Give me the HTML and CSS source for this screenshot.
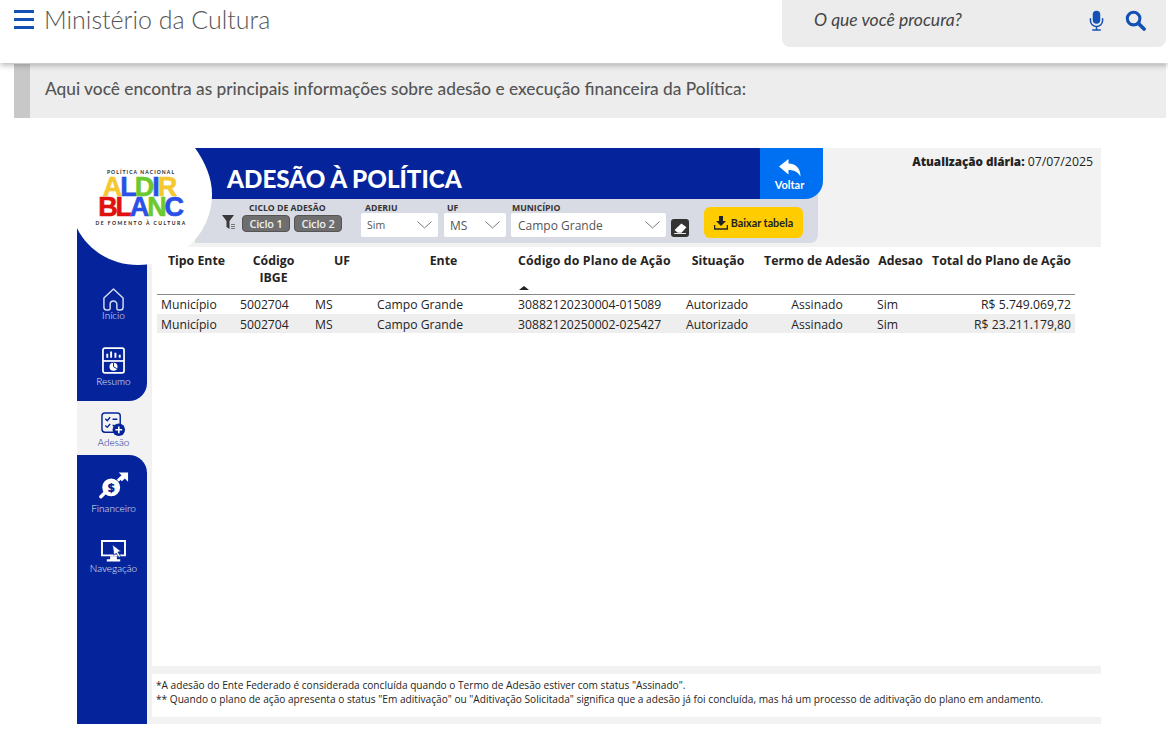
FILE: index.html
```html
<!DOCTYPE html>
<html lang="pt-BR">
<head>
  <meta charset="UTF-8" />
  <meta name="viewport" content="width=device-width, initial-scale=1.0"/>
  <title>Ministério da Cultura</title>
  <link rel="stylesheet" href="styles.css">
</head>
<body>
  <header class="site-header">
    <div class="site-brand">
      <div class="menu-icon"><span></span><span></span><span></span></div>
      <div class="site-name">Ministério da Cultura</div>
    </div>
    <div class="search-box">
      <span class="search-text">O que você procura?</span>
      <svg class="mic-icon" viewBox="0 0 16 22" width="15" height="21">
        <rect x="4" y="0.5" width="8" height="14" rx="4" fill="#1351b4"/>
        <path d="M1.5 9v2a6.5 6.5 0 0 0 13 0V9M8 17.5v2.5M4 21h8" fill="none" stroke="#1351b4" stroke-width="1.6" stroke-linecap="round"/>
      </svg>
      <svg class="search-icon" viewBox="0 0 22 22" width="21" height="21">
        <circle cx="9" cy="9" r="6.6" fill="none" stroke="#1351b4" stroke-width="3.2"/>
        <path d="M14 14l6 6" stroke="#1351b4" stroke-width="3.8" stroke-linecap="round"/>
      </svg>
    </div>
  </header>

  <div class="intro">Aqui você encontra as principais informações sobre adesão e execução financeira da Política:</div>

  <section class="report">
    <!-- Logo sits over the corner of the nav and banner -->
    <div class="logo">
      <svg class="logo-shape" viewBox="0 0 135 117" width="135" height="117">
        <path d="M0 0H118C128 14 135 30 135 46C135 86 102 117 61 117C35 117 11 103 0 80Z" fill="#fff"/>
      </svg>
      <div class="logo-small logo-top">POLÍTICA NACIONAL</div>
      <div class="logo-word"><span class="c-yellow">A</span><span class="c-blue">L</span><span class="c-green">D</span><span class="c-blue">I</span><span class="c-yellow">R</span></div>
      <div class="logo-word logo-word2"><span class="c-red">B</span><span class="c-red">L</span><span class="c-blue">A</span><span class="c-green">N</span><span class="c-blue">C</span></div>
      <div class="logo-small logo-bottom">DE FOMENTO À CULTURA</div>
    </div>

    <aside class="side">
      <div class="side-block side-top">
        <div class="side-item item-home">
          <svg viewBox="0 0 24 26" width="23" height="25">
            <path d="M2 11.5L12 2l10 9.5V21a3 3 0 0 1-3 3h-2a1.5 1.5 0 0 1-1.5-1.5V18a3.500 3.500 0 0 0-7 0v4.500A1.500 1.500 0 0 1 7 24H5a3 3 0 0 1-3-3Z" fill="none" stroke="#d7dcf0" stroke-width="1.5" stroke-linejoin="round"/>
          </svg>
          <span>Início</span>
        </div>
        <div class="side-item item-resumo">
          <svg viewBox="0 0 24 28" width="23" height="27">
            <rect x="1" y="1" width="22" height="26" rx="2" fill="none" stroke="#fff" stroke-width="1.800"/>
            <path d="M1 14.500h22" stroke="#fff" stroke-width="1.800"/>
            <path d="M5.500 11V7M9.500 11V4.500M14 11V6M18.500 11V8" stroke="#fff" stroke-width="2"/>
            <circle cx="12" cy="20.500" r="4.200" fill="#fff"/>
            <path d="M12 20.500V16.300M12 20.500l3.500 2" stroke="#05249b" stroke-width="1"/>
          </svg>
          <span>Resumo</span>
        </div>
      </div>
      <div class="side-item side-active">
        <svg viewBox="0 0 26 26" width="25" height="25">
          <rect x="1" y="1" width="19" height="20" rx="3" fill="none" stroke="#05249b" stroke-width="1.500"/>
          <path d="M4.500 7l2 2 3-3.500M4.500 14l2 2 3-3.500M12 7.500h5M12 14h2" fill="none" stroke="#05249b" stroke-width="1.400"/>
          <circle cx="18.500" cy="18.500" r="6.500" fill="#05249b"/>
          <path d="M18.500 15v7M15 18.500h7" stroke="#fff" stroke-width="1.700"/>
        </svg>
        <span>Adesão</span>
      </div>
      <div class="side-block side-bottom">
        <div class="side-item item-fin">
          <svg viewBox="0 0 32 30" width="30" height="29">
            <path d="M2 27l4-4" stroke="#fff" stroke-width="3.500" stroke-linecap="round"/>
            <circle cx="13" cy="17" r="9.500" fill="#fff"/>
            <path d="M20 10l5-5" stroke="#fff" stroke-width="3"/>
            <path d="M21 1h10v10l-3.500-3.500-3 3-3-3 3-3Z" fill="#fff"/>
            <text x="13" y="21.500" class="dollar">$</text>
          </svg>
          <span>Financeiro</span>
        </div>
        <div class="side-item item-nav">
          <svg viewBox="0 0 26 24" width="25" height="23">
            <path d="M1 1h24v15H1Z" fill="none" stroke="#fff" stroke-width="2"/>
            <path d="M9.500 17v3H6v2.500h14V20h-3.500v-3" fill="#fff"/>
            <path d="M12 5l9 7-3.500 .5 3 4.500-1.800 1.200-3-4.500L13.500 16Z" fill="#fff" stroke="#05249b" stroke-width=".7"/>
          </svg>
          <span>Navegação</span>
        </div>
      </div>
    </aside>

    <div class="content">
      <div class="report-head">
        <div class="head-left">
          <div class="banner">
            <h1 class="banner-title">ADESÃO À POLÍTICA</h1>
            <div class="back-btn">
              <svg viewBox="0 0 22 18" width="22" height="18">
                <path d="M0 7.500L9.500 0v4.500C16 4.500 21.500 8.500 21.500 17.500 19 13 15 11 9.500 11v4.500Z" fill="#fff"/>
              </svg>
              <span>Voltar</span>
            </div>
          </div>
          <div class="filters">
            <svg class="funnel" viewBox="0 0 14 15" width="14" height="15">
              <path d="M0 0h12L7.500 6v8L4.500 12V6Z" fill="#3a3a3a"/>
              <path d="M9 9.500h4M9 11.500h4M9 13.500h4" stroke="#777" stroke-width="1"/>
            </svg>
            <div class="filter filter-ciclo">
              <label>CICLO DE ADESÃO</label>
              <div class="ciclo-btns">
                <button class="ciclo-btn">Ciclo 1</button>
                <button class="ciclo-btn">Ciclo 2</button>
              </div>
            </div>
            <div class="filter filter-aderiu">
              <label>ADERIU</label>
              <div class="select select-small">Sim<svg viewBox="0 0 15 8" width="15" height="8"><path d="M.5 .5L7.500 7l7-6.500" fill="none" stroke="#777"/></svg></div>
            </div>
            <div class="filter filter-uf">
              <label>UF</label>
              <div class="select">MS<svg viewBox="0 0 15 8" width="15" height="8"><path d="M.5 .5L7.500 7l7-6.500" fill="none" stroke="#777"/></svg></div>
            </div>
            <div class="filter filter-mun">
              <label>MUNICÍPIO</label>
              <div class="select">Campo Grande<svg viewBox="0 0 15 8" width="15" height="8"><path d="M.5 .5L7.500 7l7-6.500" fill="none" stroke="#777"/></svg></div>
            </div>
            <div class="eraser">
              <svg viewBox="0 0 14 12" width="13" height="11">
                <path d="M8 0.500l5.500 4-5.500 6H4L.5 7.500Z" fill="#fff"/>
                <path d="M0 11.500h13" stroke="#fff" stroke-width="1"/>
              </svg>
            </div>
            <button class="download-btn">
              <svg viewBox="0 0 14 14" width="14" height="14">
                <path d="M5 0h4v5h3L7 10 2 5h3Z" fill="#222"/>
                <path d="M.5 9v4h13V9" fill="none" stroke="#222" stroke-width="1.600"/>
              </svg>
              Baixar tabela
            </button>
          </div>
        </div>
        <div class="update"><b>Atualização diária:</b> 07/07/2025</div>
      </div>

      <div class="table-area">
        <table class="data-table">
          <colgroup>
            <col class="w-tipo"><col class="w-ibge"><col class="w-uf"><col class="w-ente"><col class="w-plano"><col class="w-sit"><col class="w-termo"><col class="w-ades"><col class="w-total">
          </colgroup>
          <thead>
            <tr>
              <th>Tipo Ente</th>
              <th class="th-ibge">Código IBGE</th>
              <th>UF</th>
              <th>Ente</th>
              <th class="th-plano">Código do Plano de Ação<span class="sort-arrow"></span></th>
              <th class="th-sit">Situação</th>
              <th>Termo de Adesão</th>
              <th>Adesao</th>
              <th>Total do Plano de Ação</th>
            </tr>
          </thead>
          <tbody>
            <tr>
              <td>Município</td><td>5002704</td><td>MS</td><td>Campo Grande</td><td>30882120230004-015089</td><td>Autorizado</td><td class="center">Assinado</td><td>Sim</td><td class="right">R$ 5.749.069,72</td>
            </tr>
            <tr class="striped">
              <td>Município</td><td>5002704</td><td>MS</td><td>Campo Grande</td><td>30882120250002-025427</td><td>Autorizado</td><td class="center">Assinado</td><td>Sim</td><td class="right">R$ 23.211.179,80</td>
            </tr>
          </tbody>
        </table>
      </div>

      <div class="notes">
        <p>*A adesão do Ente Federado é considerada concluída quando o Termo de Adesão estiver com status "Assinado".</p>
        <p>** Quando o plano de ação apresenta o status "Em aditivação" ou "Aditivação Solicitada" significa que a adesão já foi concluída, mas há um processo de aditivação do plano em andamento.</p>
      </div>
    </div>
  </section>
</body>
</html>
```

FILE: styles.css
```css
body {
  margin: 0;
  background: #fff;
  color: #222;
  font-family: 'Open Sans', sans-serif;
  overflow: hidden;
}

/* Site header */
.site-header {
  display: flex;
  justify-content: space-between;
  height: 63px;
  padding: 0 2px 0 14px;
  background: #fff;
  box-shadow: 0 2px 6px rgba(0,0,0,0.3);
  position: relative;
  z-index: 2;
}
.site-brand {
  display: flex;
  align-items: flex-start;
  gap: 10px;
}
.menu-icon {
  display: flex;
  flex-direction: column;
  gap: 5px;
  width: 20px;
  padding-top: 10px;
}
.menu-icon span {
  height: 3px;
  background: #1351b4;
}
.site-name {
  font-family: 'Lato', sans-serif;
  font-weight: 300;
  font-size: 25px;
  line-height: 38px;
  color: #555;
}
.search-box {
  display: flex;
  align-items: center;
  width: 384px;
  height: 47px;
  box-sizing: border-box;
  padding: 0 20px 6px 32px;
  background: #ececec;
  border-radius: 0 0 8px 8px;
}
.search-text {
  flex: 1;
  font-family: 'Lato', sans-serif;
  font-style: italic;
  font-size: 17.500px;
  line-height: 20px;
  padding-bottom: 2px;
  color: #444;
}
.mic-icon { margin-right: 21px; }

/* Intro band */
.intro {
  margin: 1px 2px 0 14px;
  height: 54px;
  box-sizing: border-box;
  padding-left: 15px;
  background: #ededed;
  border-left: 16px solid #c8c8c8;
  font-family: 'Lato', sans-serif;
  font-weight: 500;
  font-size: 17.300px;
  line-height: 50px;
  color: #555;
}

/* Report */
.report {
  position: relative;
  display: flex;
  width: 1024px;
  height: 576px;
  margin: 30px 0 0 77px;
  color: #252423;
}
.logo {
  position: absolute;
  left: 0;
  top: 0;
  width: 135px;
  height: 117px;
  z-index: 1;
}
.logo-shape {
  position: absolute;
  left: 0;
  top: 0;
}
.logo-small, .logo-word {
  position: relative;
  text-align: center;
  width: 110px;
  margin-left: 9px;
  color: #222;
}
.logo-small {
  font-family: 'Lato', sans-serif;
  font-size: 5px;
  font-weight: 700;
  white-space: nowrap;
}
.logo-top {
  padding-top: 21px;
  line-height: 7px;
  letter-spacing: 1.100px;
}
.logo-bottom {
  line-height: 8px;
  letter-spacing: 1.500px;
  margin-top: 2px;
}
.logo-word {
  font-family: 'Liberation Sans', sans-serif;
  font-weight: 700;
  font-size: 27px;
  line-height: 20px;
  letter-spacing: -2px;
  height: 20px;
  margin: 1px 0 0 7px;
  -webkit-text-stroke: 0.6px currentColor;
}
.logo-word2 { margin: 0 0 0 8px; letter-spacing: -2.200px; }
.c-yellow { color: #f5c832; }
.c-blue { color: #2a50e8; }
.c-green { color: #6cc92e; }
.c-red { color: #e0100f; }

/* Left nav */
.side {
  display: flex;
  flex-direction: column;
  width: 75px;
  flex-shrink: 0;
  background: #f2f2f2;
}
.side-block {
  width: 70px;
  background: #05249b;
  color: #e6e9f5;
}
.side-top {
  height: 253px;
  box-sizing: border-box;
  padding-top: 139px;
  border-radius: 0 0 18px 0;
}
.side-bottom {
  flex: 1;
  padding-top: 16px;
  border-radius: 0 18px 0 0;
}
.side-item {
  display: flex;
  flex-direction: column;
  align-items: center;
  width: 70px;
  box-sizing: border-box;
  padding-left: 3px;
  font-family: 'Lato', sans-serif;
  font-weight: 300;
  font-size: 10px;
  line-height: 12px;
}
.side-item svg { display: block; margin-bottom: 1px; }
.item-home svg { margin-bottom: -3px; }
.item-resumo { margin-top: 26px; }
.item-fin svg { margin-bottom: 2px; }
.item-nav { margin-top: 26px; }
.item-nav svg { margin-bottom: -1px; }
.side-active {
  height: 54px;
  padding-top: 11px;
  color: #05249b;
}
.side-active svg { margin-bottom: -1px; }
.dollar {
  font-family: 'Open Sans', sans-serif;
  font-weight: 800;
  font-size: 13px;
  fill: #05249b;
  text-anchor: middle;
}

/* Banner and filters */
.content {
  display: flex;
  flex-direction: column;
  flex: 1;
  background: #f2f2f2;
}
.report-head {
  display: flex;
  height: 99px;
}
.head-left {
  width: 628px;
  margin-left: 43px;
  flex-shrink: 0;
}
.banner {
  position: relative;
  display: flex;
  height: 51px;
}
.banner-title {
  flex: 1;
  margin: 0;
  padding: 14px 0 0 32px;
  background: #05249b;
  font-family: 'Lato', sans-serif;
  font-weight: 900;
  font-size: 24.200px;
  line-height: 34px;
  color: #fff;
}
.back-btn {
  display: flex;
  flex-direction: column;
  align-items: center;
  width: 63px;
  box-sizing: border-box;
  padding: 11px 4px 0 0;
  background: #0070f2;
  border-radius: 0 0 18px 0;
  color: #fff;
  font-family: 'Lato', sans-serif;
  font-size: 11px;
  font-weight: 700;
  line-height: 12px;
}
.back-btn svg { margin-bottom: 2px; }
/* runs up behind the banner so the Voltar corner shows this grey */
.filters {
  display: flex;
  align-items: flex-start;
  width: 623px;
  height: 62px;
  margin-top: -18px;
  box-sizing: border-box;
  padding-top: 18px;
  background: #d9dbe4;
  border-radius: 0 0 8px 0;
}
.funnel { margin: 16px 0 0 27px; }
.filter label {
  display: block;
  font-size: 8.700px;
  font-weight: 700;
  line-height: 10px;
  padding-top: 4px;
  color: #333;
}
.filter-ciclo { margin-left: 6px; width: 100px; }
.filter-ciclo label { padding-left: 7px; }
.ciclo-btns { display: flex; gap: 4px; margin-top: 2px; }
.ciclo-btn {
  width: 48px;
  height: 17px;
  padding: 0;
  background: #6e6e6e;
  border: 1px solid #555;
  border-radius: 4px;
  color: #eee;
  font-family: 'Open Sans', sans-serif;
  font-size: 11px;
  font-weight: 600;
  letter-spacing: -0.2px;
  line-height: 14px;
}
.select {
  display: flex;
  align-items: center;
  justify-content: space-between;
  height: 24px;
  box-sizing: border-box;
  padding: 0 6px 0 6px;
  background: #fff;
  border-radius: 2px;
  font-size: 12px;
  color: #555;
}
.select-small { font-size: 10.500px; }
.filter-aderiu { margin-left: 19px; width: 77px; }
.filter-aderiu label { padding-left: 4px; }
.filter-uf { margin-left: 6px; width: 62px; }
.filter-uf label { padding-left: 3px; }
.filter-mun { margin-left: 5px; width: 155px; }
.filter-mun label { padding-left: 1px; }
.filter-mun .select { padding-left: 7px; }
.eraser {
  display: flex;
  align-items: center;
  justify-content: center;
  width: 18px;
  height: 18px;
  margin: 20px 0 0 5px;
  background: #333;
  border-radius: 3px;
}
.download-btn {
  display: flex;
  align-items: center;
  justify-content: center;
  gap: 3px;
  width: 99px;
  height: 31px;
  margin: 8px 0 0 15px;
  padding: 0;
  background: #ffcc00;
  border: none;
  border-radius: 6px;
  color: #222;
  font-family: 'Lato', sans-serif;
  font-size: 10.800px;
  font-weight: 700;
}
.update {
  flex: 1;
  padding: 5px 8px 0 0;
  text-align: right;
  font-size: 12.300px;
  line-height: 16px;
  white-space: nowrap;
}
.update b { font-weight: 800; font-size: 11.700px; }

/* Table */
.table-area {
  flex: 1;
  padding: 5px 0 0 5px;
  background: #fff;
}
.data-table {
  position: relative;
  z-index: 2;
  table-layout: fixed;
  width: 918px;
  border-collapse: collapse;
  font-size: 12.200px;
}
.w-tipo { width: 79px; }
.w-ibge { width: 75px; }
.w-uf { width: 62px; }
.w-ente { width: 141px; }
.w-plano { width: 168px; }
.w-sit { width: 79px; }
.w-termo { width: 112px; }
.w-ades { width: 55px; }
.w-total { width: 147px; }
.data-table th {
  height: 42px;
  padding: 0;
  vertical-align: top;
  border-bottom: 1px solid #888;
  font-size: 12.300px;
  font-weight: 700;
  line-height: 17px;
  color: #252423;
}
.data-table .th-ibge { padding: 0 8px; }
.data-table .th-plano { padding-left: 4px; text-align: left; letter-spacing: 0.15px; white-space: nowrap; }
.data-table .th-sit { padding-right: 7px; }
.data-table td {
  height: 19px;
  padding: 0 4px;
  white-space: nowrap;
  line-height: 15px;
}
.sort-arrow {
  display: block;
  width: 0;
  height: 0;
  margin: 17px 0 0 1px;
  border-left: 5px solid transparent;
  border-right: 5px solid transparent;
  border-bottom: 4px solid #252423;
}
.center { text-align: center; }
.right { text-align: right; }
.data-table .striped td { background: #eee; padding-top: 1px; height: 18px; }

/* Footnotes */
.notes {
  margin-top: 8px;
  height: 43px;
  box-sizing: border-box;
  padding: 4px 0 0 4px;
  background: #fff;
  margin-bottom: 7px;
  font-size: 10.130px;
  line-height: 14px;
}
.notes p { margin: 0; white-space: nowrap; }
```
